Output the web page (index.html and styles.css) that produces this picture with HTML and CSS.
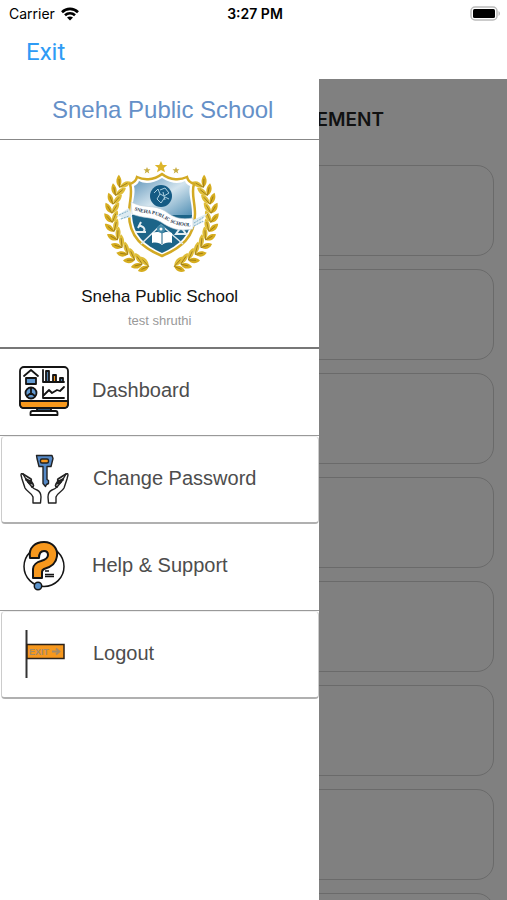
FILE: index.html
```html
<!DOCTYPE html>
<html lang="en">
<head>
  <meta charset="UTF-8" />
  <meta name="viewport" content="width=device-width, initial-scale=1.0"/>
  <title>Sneha Public School</title>
  <link rel="stylesheet" href="styles.css">
</head>
<body>

<div class="status-bar">
  <div class="carrier">
    <span>Carrier</span>
    <svg width="18" height="14" viewBox="0 0 18 14" fill="none" stroke="#000" stroke-width="2.6">
      <path d="M1 5.2C5.500 .8 12.500 .8 17 5.200"/>
      <path d="M4 8.300C6.800 5.600 11.200 5.600 14 8.300"/>
      <path d="M9 13.500L6 10.500C7.700 9 10.300 9 12 10.500Z" fill="#000" stroke="none"/>
    </svg>
  </div>
  <div class="time">3:27 PM</div>
  <div class="battery">
    <svg width="31" height="15" viewBox="0 0 31 15">
      <rect x="1" y="1" width="26" height="13" rx="4" fill="#fff" stroke="#bbb" stroke-width="1.500"/>
      <rect x="3" y="3" width="22" height="9" rx="1.500" fill="#000"/>
      <path d="M28.500 5v5c2-1 2-4 0-5z" fill="#bbb"/>
    </svg>
  </div>
</div>

<div class="nav-bar">
  <button class="exit-btn">Exit</button>
</div>

<div class="stage">
  <!-- Page behind the drawer -->
  <main class="page">
    <h2 class="page-title">EMENT</h2>
    <div class="card"></div>
    <div class="card"></div>
    <div class="card"></div>
    <div class="card"></div>
    <div class="card"></div>
    <div class="card"></div>
    <div class="card"></div>
    <div class="card"></div>
  </main>

  <!-- Drawer -->
  <aside class="drawer">
    <h1 class="drawer-title">Sneha Public School</h1>

    <div class="profile">
      <svg class="logo" width="140" height="125" viewBox="0 0 140 125">
        <defs>
          <linearGradient id="sky" x1="0" y1="0" x2="1" y2="1">
            <stop offset="0" stop-color="#5d93b8"/>
            <stop offset=".5" stop-color="#d3e4ee"/>
            <stop offset="1" stop-color="#4f8eb4"/>
          </linearGradient>
          <g id="leaf">
            <path d="M22 68C17 68 14 64 14.500 59C19 60 22 63 22 68Z" fill="#d6ad1f"/>
            <path d="M22 68C21 62 24 58 28 57C29 62 27 66 22 68Z" fill="#dfbd37"/>
            <path d="M22 68L17 62M22 68L26 60" stroke="#917014" stroke-width=".7"/>
          </g>
          <g id="branch" transform="translate(0 -3) scale(1 1.07)">
            <use href="#leaf" transform="rotate(37 71 64)"/>
            <use href="#leaf" transform="rotate(27 71 64)"/>
            <use href="#leaf" transform="rotate(17 71 64)"/>
            <use href="#leaf" transform="rotate(7 71 64)"/>
            <use href="#leaf" transform="rotate(-3 71 64)"/>
            <use href="#leaf" transform="rotate(-13 71 64)"/>
            <use href="#leaf" transform="rotate(-23 71 64)"/>
            <use href="#leaf" transform="rotate(-33 71 64)"/>
            <use href="#leaf" transform="rotate(-43 71 64)"/>
            <use href="#leaf" transform="rotate(-53 71 64)"/>
            <use href="#leaf" transform="rotate(-63 71 64)"/>
            <use href="#leaf" transform="rotate(-71 71 64)"/>
          </g>
          <path id="ribbon-line" d="M44 60C56 65 62 62 73 68C82 74 90 77 106 76"/>
        </defs>
        <use href="#branch"/>
        <use href="#branch" transform="translate(143 0) scale(-1 1)"/>
        <path d="M71 11l1.800 4h4.400l-3.400 3 1.200 4.300-4-2.400-4 2.400 1.200-4.300-3.400-3h4.400z" fill="#dcb52b"/>
        <path d="M57 17l1 2.200h2.500l-2 1.800.8 2.500-2.300-1.400-2.300 1.400.8-2.500-2-1.800H56zM86 17l1 2.200h2.500l-2 1.800.8 2.500-2.300-1.400-2.300 1.400.8-2.500-2-1.800H85z" fill="#c9ae45"/>
        <path d="M72 24C63 31 53 30 47 27C46 31 43 33 40 34C43 43 39 52 39 64C39 87 53 98 72 106C91 98 105 87 105 64C105 52 101 43 104 34C101 33 98 31 97 27C91 30 81 31 72 24Z" fill="#fff" stroke="#d3aa24" stroke-width="2.500"/>
        <path d="M72 28C63 34 54 34 49 31C48 34 46 35 44 36C46 44 42 52 42 63V66H102V63C102 52 98 44 100 36C98 35 96 34 95 31C90 34 81 34 72 28Z" fill="url(#sky)"/>
        <path d="M42 65C43 86 55 95 72 103C89 95 101 86 102 65Z" fill="#1c6488"/>
        <circle cx="71" cy="46" r="11" fill="#155b84"/>
        <path d="M64 43l4-4 2 5-3 5M70 40l5-2 4 5-5 3-4-2M67 49l4 4 4-6 4 2M73 42l2 8" fill="none" stroke="#abd0e1" stroke-width="1"/>
        <path d="M71 75L51 94M71 75L93 94" stroke="#dce8ee" stroke-width="1.500"/>
        <circle cx="71" cy="79" r="4" fill="#448aa9"/>
        <circle cx="71" cy="79" r="1.500" fill="#fff"/>
        <path d="M72 84C69 81 65 82 62 83V93C66 92 70 93 72 95C74 93 78 92 82 93V83C79 82 75 81 72 84Z" fill="#fff"/>
        <path d="M72 84v10" stroke="#1c6488"/>
        <path d="M46 82h10M51 72l-3 6M49 75l4 2q3 3 0 5M86 84h10l-5-7z" fill="none" stroke="#e3eef3" stroke-width="2"/>
        <path d="M26 66l13-8 3 9-14 3 4-3zM118 63l-15 7-2 8 15-7-5 0z" fill="#dceaf1"/>
        <path d="M29 65l9-4M31 69l8-3M104 73l10-6M104 76l9-5" stroke="#80b0c8" stroke-dasharray="2 1"/>
        <path d="M41 52C54 59 64 54 75 61C84 68 91 70 103 68V79C88 82 80 78 71 72C61 66 54 69 42 64Z" fill="#fff" stroke="#b9cbd6" stroke-width=".6"/>
        <text class="ribbon-text"><textPath href="#ribbon-line">SNEHA PUBLIC SCHOOL</textPath></text>
      </svg>
      <p class="profile-name">Sneha Public School</p>
      <p class="profile-user">test shruthi</p>
    </div>

    <nav class="menu">
      <a class="menu-item" href="#">
        <svg width="50" height="50" viewBox="0 0 50 50" fill="none" stroke="#141414" stroke-width="1.800" stroke-linejoin="round" stroke-linecap="round">
          <rect x="1" y="1" width="48" height="41" rx="4" fill="#fff"/>
          <path d="M1 35h48v3q0 4-4 4H5q-4 0-4-4z" fill="#f7981d"/>
          <path d="M18 42h14v3H18z" fill="#31587c"/>
          <path d="M11.500 49v-2q0-2 2-2h23q2 0 2 2v2z" fill="#fff"/>
          <path d="M5 10l7-6 7 6"/>
          <path d="M7 12h10v6H7z" fill="#6299d0"/>
          <circle cx="12" cy="27" r="5.500" fill="#6299d0"/>
          <path d="M12 27v-5M12 27l-4 3M12 27l4 3"/>
          <path d="M24 4v12h21M24 21v11h21M25 29l5-5 3 3 5-3 3 1 4-4"/>
          <path d="M27 5h3v11h-3z" fill="#527eaa"/>
          <path d="M34 9h3v7h-3z" fill="#f7981d"/>
          <path d="M41 12h3v4h-3z" fill="#527eaa"/>
        </svg>
        <span>Dashboard</span>
      </a>
      <a class="menu-item boxed" href="#">
        <svg width="50" height="50" viewBox="0 0 50 50" fill="none" stroke="#222" stroke-width="1.400" stroke-linejoin="round" stroke-linecap="round">
          <path d="M16.500 1.500h15.500l1 3-2 8h-4v13l1.500 1v3l-2 1-1 2-2.500-3V12.500h-4l-2-8z" fill="#5589c7"/>
          <rect x="20.500" y="5" width="8" height="4" rx="1.500" fill="#f7981d"/>
          <g id="hand">
            <path d="M13 49V43C12 39 7 38 5 34L2 25L1 21Q1 19 3 20L7 27L12 33Q14 35 17 36Q21 38 21 43L20.500 49Z" fill="#fff"/>
            <path d="M3 20l8 5q1 2-1 2l-4-2M6 26l5 1 2 3-4-1M8 28l4 1q3 3 0 4" stroke-width="1.700"/>
          </g>
          <use href="#hand" transform="translate(49 0) scale(-1 1)"/>
        </svg>
        <span>Change Password</span>
      </a>
      <a class="menu-item" href="#">
        <svg width="50" height="50" viewBox="0 0 50 50" fill="none" stroke="#151515" stroke-width="1.500">
          <circle cx="25" cy="25.500" r="20"/>
          <path d="M11 17C9 6 17 1 25 1C34 1 39 8 38 15C37 23 32 26 25 28Q23 29 23 31V37H14V28C14 24 18 21 22 20Q29 18 29 14Q29 10 25 10Q20 10 20 17Z" fill="#f7981d" stroke-width="2" stroke-linejoin="round"/>
          <path d="M26 30h4M26 33.500h9M26 35.500h9" stroke-width="1.400"/>
          <circle cx="19" cy="45" r="3.700" fill="#5b93cc"/>
        </svg>
        <span>Help &amp; Support</span>
      </a>
      <a class="menu-item boxed" href="#">
        <svg width="50" height="50" viewBox="0 0 50 50">
          <path d="M6.500 1v48" stroke="#333" stroke-width="2"/>
          <rect x="7" y="15.500" width="37" height="14" fill="#f7981d" stroke="#2b2118" stroke-width="1.500"/>
          <text class="exit-sign" x="9" y="26">EXIT</text>
          <path d="M32 22.500h8M36 19.500l3.500 3-3.500 3" fill="none" stroke="#a38a68" stroke-width="1.800"/>
        </svg>
        <span>Logout</span>
      </a>
    </nav>
  </aside>
</div>

</body>
</html>
```

FILE: styles.css
```css
* {
  box-sizing: border-box;
}
body {
  font-family: "Liberation Sans", Arial, sans-serif;
  margin: 0;
  height: 100vh;
  display: flex;
  flex-direction: column;
  overflow: hidden;
  background: #fff;
}
h1, h2, p {
  margin: 0;
  font-weight: normal;
}
svg {
  flex-shrink: 0;
}
.status-bar {
  display: grid;
  grid-template-columns: 1fr auto 1fr;
  align-items: center;
  height: 27px;
  padding: 0 6px 0 9px;
  font-family: Inter, sans-serif;
  font-size: 14px;
}
.carrier {
  display: flex;
  align-items: center;
  gap: 6px;
}
.time {
  font-weight: 600;
}
.battery {
  display: flex;
  justify-content: flex-end;
}
.nav-bar {
  display: flex;
  align-items: center;
  height: 52px;
  padding: 0 26px 2px;
}
.exit-btn {
  border: none;
  background: none;
  padding: 0;
  font-family: Roboto, sans-serif;
  font-size: 24px;
  color: #2e9bf5;
}
.stage {
  position: relative;
  flex: 1;
  overflow: hidden;
  background: #808080;
}
.page {
  display: flex;
  flex-direction: column;
  gap: 13px;
  padding: 0 13px;
}
.page-title {
  height: 73px;
  line-height: 81px;
  padding-right: 110px;
  text-align: right;
  font-family: Inter, sans-serif;
  font-size: 19px;
  font-weight: 600;
  color: #111;
}
.card {
  flex-shrink: 0;
  height: 91px;
  border: 1px solid #6a6a6a;
  border-radius: 17px;
}
.drawer {
  position: absolute;
  top: 0;
  left: 0;
  bottom: 0;
  width: 63%;
  background: #fff;
}
.drawer-title {
  height: 61px;
  line-height: 62px;
  padding-left: 6px;
  border-bottom: 1px solid #888;
  text-align: center;
  font-size: 24px;
  color: #6590c8;
}
.profile {
  display: flex;
  flex-direction: column;
  align-items: center;
  height: 209px;
  padding-top: 10px;
  border-bottom: 2px solid #777;
}
.profile-name {
  margin-top: 12px;
  line-height: 20px;
  font-size: 17px;
  color: #111;
}
.profile-user {
  margin-top: 6px;
  line-height: 16px;
  font-size: 13px;
  color: #999;
}
.menu-item {
  display: flex;
  align-items: center;
  gap: 23px;
  height: 87px;
  padding: 0 19px 3px;
  border-bottom: 1px solid #999;
  font-size: 20px;
  color: #4d4d4d;
  text-decoration: none;
}
.menu-item.boxed {
  height: 88px;
  margin-left: 1px;
  padding: 0 18px 2px;
  border: 1px solid #ccc;
  border-top-color: #eee;
  border-bottom: 2px solid #b0b0b0;
  border-radius: 4px;
}
.ribbon-text {
  font-family: "Liberation Serif", serif;
  font-size: 5px;
  font-weight: bold;
  fill: #26364d;
}
.exit-sign {
  font-size: 9px;
  font-weight: bold;
  fill: #a38a68;
}
```
